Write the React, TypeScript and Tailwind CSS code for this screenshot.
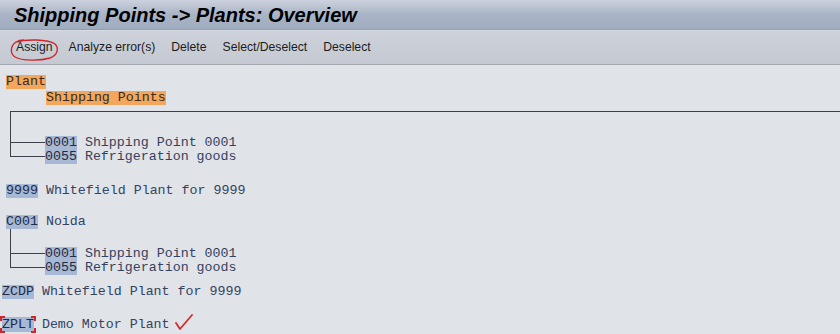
import React from 'react'

const mono = { fontFamily: '"Liberation Mono", "Courier New", monospace' }

function Key({ children }: { children: React.ReactNode }) {
  return <span className="inline-block bg-[#a7b8d4] text-[#1f2b45] leading-[14px]">{children}</span>
}

function Label({ children }: { children: React.ReactNode }) {
  return <span className="inline-block bg-[#f3a65c] text-[#3a2a1a] leading-[14px]">{children}</span>
}

// one child row of a tree: connector on the left, then key and text
function Branch({ last, code, text }: { last?: boolean; code: string; text: string }) {
  return (
    <div className="flex h-[14px] items-stretch">
      <div className="ml-[10px] flex w-[35px] flex-col">
        <div className="h-[7px] border-b border-l border-[#3a3f4a]" />
        <div className={`flex-1 ${last ? '' : 'border-l border-[#3a3f4a]'}`} />
      </div>
      <div className="flex items-center whitespace-pre">
        <Key>{code}</Key>
        <span> {text}</span>
      </div>
    </div>
  )
}

export default function App() {
  const actions = ['Assign', 'Analyze error(s)', 'Delete', 'Select/Deselect', 'Deselect']

  return (
    <div className="w-[840px] h-[334px] overflow-hidden bg-[#e0e3e8]">
      {/* Title bar */}
      <div className="h-[30px] border-b border-[#979dab] bg-gradient-to-b from-[#ccd1dd] via-[#a9b4c6] to-[#a0adbf] pl-[14px] flex items-center">
        <h1
          className="text-[20px] font-bold italic text-black leading-none"
          style={{ fontFamily: '"Liberation Sans", Arial, sans-serif' }}
        >
          Shipping Points -&gt; Plants: Overview
        </h1>
      </div>

      {/* Toolbar */}
      <div
        className="relative h-[35px] border-b border-t border-t-[#d6dae2] border-b-[#a2a7b0] bg-gradient-to-b from-[#cdd2da] to-[#c5cad2] flex items-center pl-[16px] gap-[16px] text-[12.2px] text-[#1c1c1c]"
        style={{ fontFamily: '"Liberation Sans", Tahoma, sans-serif' }}
      >
        {actions.map((a) => (
          <span key={a}>{a}</span>
        ))}
        <svg className="absolute left-[10px] top-[7px]" width="50" height="24" viewBox="0 0 50 24">
          <path
            d="M6 4 C 16 1, 38 1, 45 6 C 49 10, 48 17, 40 20 C 30 23, 12 23, 5 19 C 0 16, 0 8, 6 4 C 9 2, 12 2, 14 2"
            fill="none"
            stroke="#d0262b"
            strokeWidth="1.4"
          />
        </svg>
      </div>

      {/* Tree list */}
      <div className="pt-[9px] text-[13.3px] text-[#34425f]" style={mono}>
        <div className="h-[16px] pl-[6px] flex items-center">
          <Label>Plant</Label>
        </div>
        <div className="h-[16px] pl-[46px] flex items-center">
          <Label>Shipping Points</Label>
        </div>

        <div className="mt-[5px] ml-[10px] h-[25px] border-t border-l border-[#3a3f4a]" />
        <Branch code="0001" text="Shipping Point 0001" />
        <Branch last code="0055" text="Refrigeration goods" />

        <div className="mt-[19px] h-[15px] pl-[6px] flex items-center whitespace-pre">
          <Key>9999</Key>
          <span> Whitefield Plant for 9999</span>
        </div>

        <div className="mt-[17px] h-[14px] pl-[6px] flex items-center whitespace-pre">
          <Key>C001</Key>
          <span> Noida</span>
        </div>
        <div className="ml-[10px] h-[18px] border-l border-[#3a3f4a]" />
        <Branch code="0001" text="Shipping Point 0001" />
        <Branch last code="0055" text="Refrigeration goods" />

        <div className="mt-[10px] h-[14px] pl-[2px] flex items-center whitespace-pre">
          <Key>ZCDP</Key>
          <span> Whitefield Plant for 9999</span>
        </div>

        <div className="mt-[17px] h-[17px] pl-[2px] flex items-center whitespace-pre">
          <span className="relative inline-block bg-[#a7b8d4] text-[#1f2b45] leading-[15px]">
            ZPLT
            <span className="absolute -left-[2px] -top-[1px] w-[5px] h-[5px] border-l-2 border-t-2 border-[#d0262b]" />
            <span className="absolute -right-[2px] -top-[1px] w-[5px] h-[5px] border-r-2 border-t-2 border-[#d0262b]" />
            <span className="absolute -left-[2px] -bottom-[1px] w-[5px] h-[5px] border-l-2 border-b-2 border-[#d0262b]" />
            <span className="absolute -right-[2px] -bottom-[1px] w-[5px] h-[5px] border-r-2 border-b-2 border-[#d0262b]" />
          </span>
          <span> Demo Motor Plant</span>
          <svg width="20" height="18" viewBox="0 0 20 18" className="ml-[4px] -mt-[4px]">
            <path d="M2 9 L6 15 L18 1" fill="none" stroke="#d42a2a" strokeWidth="1.8" strokeLinecap="round" strokeLinejoin="round" />
          </svg>
        </div>
      </div>
    </div>
  )
}
